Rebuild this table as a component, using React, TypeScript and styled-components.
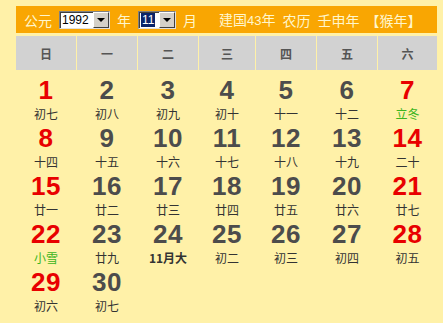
import styled, { createGlobalStyle } from "styled-components";

const GlobalStyle = createGlobalStyle`
  html, body {
    margin: 0;
    padding: 0;
    background: #fff1a8;
  }
  body {
    font-family: "Noto Sans CJK SC", "Liberation Sans", sans-serif;
  }
`;

type Day = { n: number; lunar: string; kind?: "term" | "month" };

const days: Day[] = [
  { n: 1, lunar: "初七" },
  { n: 2, lunar: "初八" },
  { n: 3, lunar: "初九" },
  { n: 4, lunar: "初十" },
  { n: 5, lunar: "十一" },
  { n: 6, lunar: "十二" },
  { n: 7, lunar: "立冬", kind: "term" },
  { n: 8, lunar: "十四" },
  { n: 9, lunar: "十五" },
  { n: 10, lunar: "十六" },
  { n: 11, lunar: "十七" },
  { n: 12, lunar: "十八" },
  { n: 13, lunar: "十九" },
  { n: 14, lunar: "二十" },
  { n: 15, lunar: "廿一" },
  { n: 16, lunar: "廿二" },
  { n: 17, lunar: "廿三" },
  { n: 18, lunar: "廿四" },
  { n: 19, lunar: "廿五" },
  { n: 20, lunar: "廿六" },
  { n: 21, lunar: "廿七" },
  { n: 22, lunar: "小雪", kind: "term" },
  { n: 23, lunar: "廿九" },
  { n: 24, lunar: "11月大", kind: "month" },
  { n: 25, lunar: "初二" },
  { n: 26, lunar: "初三" },
  { n: 27, lunar: "初四" },
  { n: 28, lunar: "初五" },
  { n: 29, lunar: "初六" },
  { n: 30, lunar: "初七" },
];

const weekNames = ["日", "一", "二", "三", "四", "五", "六"];
const COLS = "60px 60px 60px 56px 60px 60px 59px";

const App: React.FC = () => {
  return (
    <>
      <GlobalStyle />
      <Page>
        <TopBar>
          <BarText>公元</BarText>
          <FakeSelect $w={51}>
            <SelectValue>1992</SelectValue>
            <DropBtn>
              <Arrow />
            </DropBtn>
          </FakeSelect>
          <BarText>年</BarText>
          <FakeSelect $w={38}>
            <SelectValue>
              <Picked>11</Picked>
            </SelectValue>
            <DropBtn>
              <Arrow />
            </DropBtn>
          </FakeSelect>
          <BarText>月</BarText>
          <BarText $ml={22}>
            建国<Num>43</Num>年
          </BarText>
          <BarText>农历</BarText>
          <BarText>壬申年</BarText>
          <BarText $ml={6}>【猴年】</BarText>
        </TopBar>
        <WeekRow>
          {weekNames.map((w) => (
            <WeekCell key={w}>{w}</WeekCell>
          ))}
        </WeekRow>
        <DayGrid>
          {days.map((d, i) => {
            const weekend = i % 7 === 0 || i % 7 === 6;
            return (
              <DayCell key={d.n}>
                <DayNum $red={weekend}>{d.n}</DayNum>
                <Lunar $kind={d.kind}>{d.lunar}</Lunar>
              </DayCell>
            );
          })}
        </DayGrid>
      </Page>
    </>
  );
};

const Page = styled.div`
  width: 443px;
  height: 323px;
  padding: 6px 0 0 16px;
  box-sizing: border-box;
  overflow: hidden;
`;

const TopBar = styled.div`
  width: 421px;
  height: 27px;
  background: #f9a602;
  display: flex;
  align-items: center;
  gap: 7px;
  padding-left: 8px;
  box-sizing: border-box;
`;

const BarText = styled.span<{ $ml?: number }>`
  font-size: 14px;
  line-height: 16px;
  color: #fff6cc;
  margin-left: ${(p) => (p.$ml ? p.$ml - 7 : 0)}px;
  white-space: nowrap;
`;

const Num = styled.span`
  font-family: "Liberation Sans", sans-serif;
  font-size: 13px;
`;

const FakeSelect = styled.div<{ $w: number }>`
  width: ${(p) => p.$w}px;
  height: 18px;
  box-sizing: border-box;
  background: #fff;
  border: 1px solid;
  border-color: #808080 #e0e0e0 #e0e0e0 #808080;
  box-shadow: inset 1px 1px 0 #404040;
  display: flex;
  align-items: stretch;
`;

const SelectValue = styled.div`
  flex: 1;
  display: flex;
  align-items: center;
  padding-left: 2px;
  font-family: "Liberation Sans", sans-serif;
  font-size: 12px;
  color: #000;
`;

const Picked = styled.span`
  background: #0a246a;
  color: #fff;
  padding: 0 1px;
  line-height: 14px;
`;

const DropBtn = styled.div`
  width: 16px;
  background: #d4d0c8;
  border: 1px solid;
  border-color: #fff #404040 #404040 #fff;
  box-sizing: border-box;
  display: flex;
  align-items: center;
  justify-content: center;
`;

const Arrow = styled.span`
  width: 0;
  height: 0;
  border-left: 4px solid transparent;
  border-right: 4px solid transparent;
  border-top: 4px solid #000;
`;

const WeekRow = styled.div`
  margin-top: 3px;
  width: 421px;
  display: grid;
  grid-template-columns: ${COLS};
  column-gap: 1px;
`;

const WeekCell = styled.div`
  height: 34px;
  background: #d2d2d2;
  display: flex;
  align-items: center;
  justify-content: center;
  font-size: 12px;
  font-weight: 700;
  color: #555;
`;

const DayGrid = styled.div`
  margin-top: 1px;
  width: 421px;
  display: grid;
  grid-template-columns: ${COLS};
  column-gap: 1px;
  grid-auto-rows: 48px;
`;

const DayCell = styled.div`
  display: flex;
  flex-direction: column;
  align-items: center;
  padding-top: 5px;
  box-sizing: border-box;
`;

const DayNum = styled.div<{ $red: boolean }>`
  font-family: "Liberation Sans", Arial, sans-serif;
  font-weight: 700;
  font-size: 26px;
  line-height: 29px;
  letter-spacing: 0.5px;
  color: ${(p) => (p.$red ? "#e80000" : "#4c4c4c")};
`;

const Lunar = styled.div<{ $kind?: "term" | "month" }>`
  font-size: 12px;
  line-height: 17px;
  color: ${(p) => (p.$kind === "term" ? "#3cb521" : "#333")};
  font-weight: ${(p) => (p.$kind === "month" ? 700 : 400)};
`;

export default App;
